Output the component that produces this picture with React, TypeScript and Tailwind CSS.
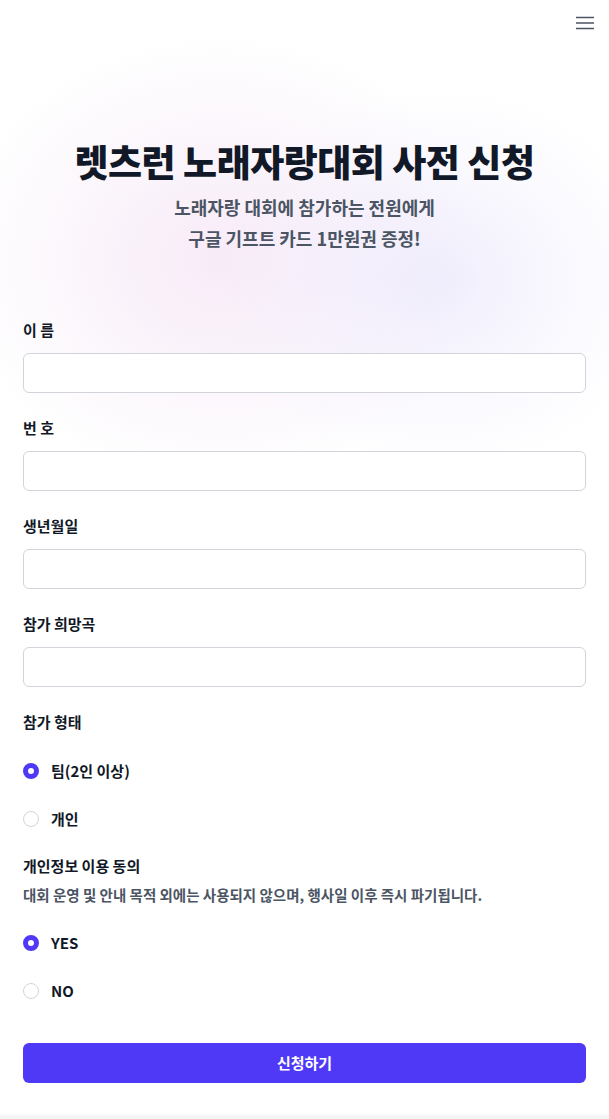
import { useState } from "react";

const FONT = { fontFamily: '"Noto Sans CJK KR", "Noto Sans", sans-serif' };

function Field({ label }: { label: string }) {
  return (
    <div className="mb-[24px]">
      <div className="mb-[12px] h-[22px] text-[15px] font-bold leading-[22px] text-[#111827]">{label}</div>
      <input className="block h-[40px] w-full rounded-[6px] border border-[#d1d5db] bg-white px-3 text-[15px] outline-none" />
    </div>
  );
}

function Radio({ checked, label, onClick }: { checked: boolean; label: string; onClick: () => void }) {
  return (
    <button type="button" onClick={onClick} className="flex h-[48px] w-full items-center gap-[12px] text-left">
      <span
        className={
          checked
            ? "box-border h-[16px] w-[16px] rounded-full border-[5px] border-[#4f39f6] bg-white"
            : "box-border h-[16px] w-[16px] rounded-full border border-[#d1d5db] bg-white"
        }
      />
      <span className="text-[15px] font-bold leading-[22px] text-[#111827]">{label}</span>
    </button>
  );
}

export default function App() {
  const [kind, setKind] = useState("team");
  const [agree, setAgree] = useState("yes");

  return (
    <div className="relative min-h-[1119px] w-full overflow-hidden bg-white" style={FONT}>
      {/* soft glow behind the hero */}
      <div className="pointer-events-none absolute left-[-40px] top-[40px] h-[440px] w-[520px] rounded-full bg-[radial-gradient(ellipse_at_center,rgba(240,214,240,0.5)_0%,rgba(244,230,246,0.3)_45%,rgba(255,255,255,0)_72%)]" />
      <div className="pointer-events-none absolute left-[220px] top-[90px] h-[380px] w-[440px] rounded-full bg-[radial-gradient(ellipse_at_center,rgba(226,222,250,0.5)_0%,rgba(236,232,252,0.25)_45%,rgba(255,255,255,0)_72%)]" />

      <div className="relative">
        <header className="flex h-[46px] items-center justify-end pr-[15px]">
          <svg width="18" height="14" viewBox="0 0 18 14" className="text-[#4b5563]">
            <path d="M0 1.5h18M0 7h18M0 12.5h18" stroke="currentColor" strokeWidth="1.6" />
          </svg>
        </header>

        <section className="pt-[95px] text-center">
          <h1 className="text-[37px] font-black leading-[40px] tracking-[-0.5px] text-[#111827]">
            렛츠런 노래자랑대회 사전 신청
          </h1>
          <p className="mt-[11px] text-[18px] font-bold leading-[31px] text-[#4b5563]">
            노래자랑 대회에 참가하는 전원에게
            <br />
            구글 기프트 카드 1만원권 증정!
          </p>
        </section>

        <form className="px-[23px] pt-[65px]" onSubmit={(e) => e.preventDefault()}>
          <Field label="이 름" />
          <Field label="번 호" />
          <Field label="생년월일" />
          <Field label="참가 희망곡" />

          <div className="h-[22px] text-[15px] font-bold leading-[22px] text-[#111827]">참가 형태</div>
          <div className="mt-[14px]">
            <Radio checked={kind === "team"} label="팀(2인 이상)" onClick={() => setKind("team")} />
            <Radio checked={kind === "solo"} label="개인" onClick={() => setKind("solo")} />
          </div>

          <div className="mt-[12px] h-[22px] text-[15px] font-bold leading-[22px] text-[#111827]">개인정보 이용 동의</div>
          <p className="mt-[7px] text-[14.5px] font-bold leading-[22px] text-[#4b5563]">
            대회 운영 및 안내 목적 외에는 사용되지 않으며, 행사일 이후 즉시 파기됩니다.
          </p>
          <div className="mt-[13px]">
            <Radio checked={agree === "yes"} label="YES" onClick={() => setAgree("yes")} />
            <Radio checked={agree === "no"} label="NO" onClick={() => setAgree("no")} />
          </div>

          <button
            type="submit"
            className="mt-[28px] block h-[40px] w-full rounded-[6px] bg-[#4f39f6] text-[15px] font-bold text-white"
          >
            신청하기
          </button>
        </form>
      </div>
      <div className="absolute bottom-0 left-0 h-[4px] w-full bg-[#f5f5f5]" />
    </div>
  );
}
